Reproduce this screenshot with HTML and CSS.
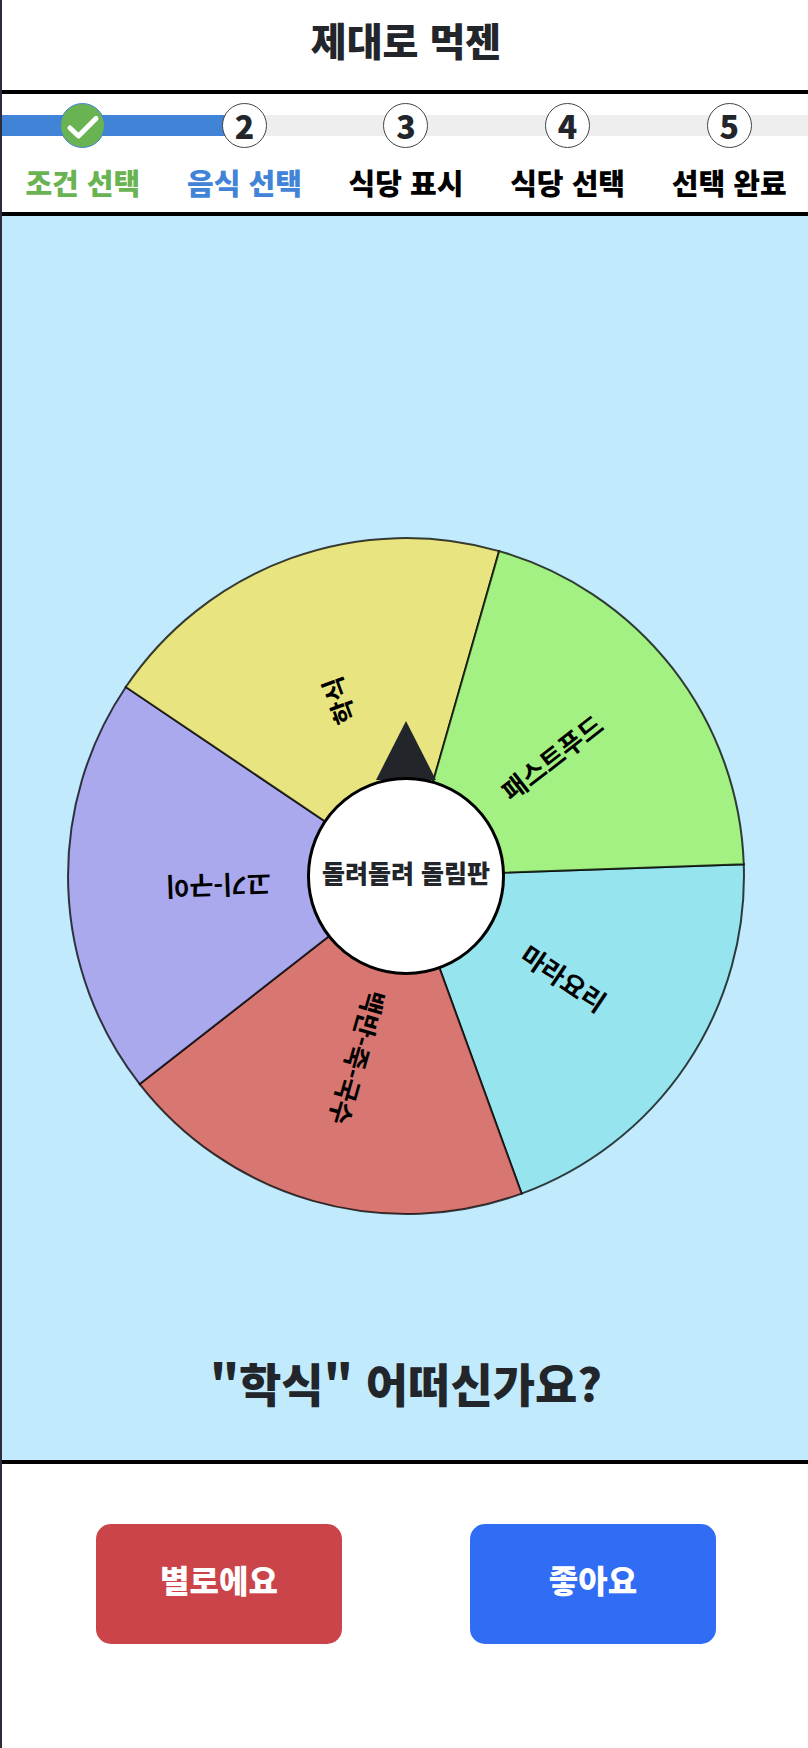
FILE: index.html
```html
<!DOCTYPE html>
<html lang="ko">
<head>
<meta charset="utf-8">
<meta name="viewport" content="width=device-width, initial-scale=1">
<title>제대로 먹젠</title>
<link rel="stylesheet" href="styles.css">
</head>
<body>
<div class="app">
  <header class="header">
    <h1 class="title">제대로 먹젠</h1>
  </header>

  <ol class="steps">
    <li class="step step-done">
      <span class="marker">
        <svg class="check" viewBox="0 0 42 42" aria-hidden="true"><path d="M8 24l8.5 8L34 14.500"/></svg>
      </span>
      <span class="label">조건 선택</span>
    </li>
    <li class="step step-active" aria-current="step">
      <span class="marker">2</span>
      <span class="label">음식 선택</span>
    </li>
    <li class="step">
      <span class="marker">3</span>
      <span class="label">식당 표시</span>
    </li>
    <li class="step">
      <span class="marker">4</span>
      <span class="label">식당 선택</span>
    </li>
    <li class="step">
      <span class="marker">5</span>
      <span class="label">선택 완료</span>
    </li>
  </ol>

  <main class="main">
    <div class="roulette">
      <svg class="wheel" viewBox="-340 -340 680 680">
        <!-- each slice spans 72 degrees, centred on the x axis before it is turned -->
        <g transform="rotate(34)"><path class="slice" fill="#96e4ed" d="M0 0L273.4-198.7A338 338 0 0 1 273.4 198.7Z"/><text class="food" x="188" y="7">마라요리</text></g>
        <g transform="rotate(106)"><path class="slice" fill="#d87671" d="M0 0L273.4-198.7A338 338 0 0 1 273.4 198.7Z"/><text class="food" x="188" y="7">백반-죽-국수</text></g>
        <g transform="rotate(178)"><path class="slice" fill="#aaa9ee" d="M0 0L273.4-198.7A338 338 0 0 1 273.4 198.7Z"/><text class="food" x="188" y="7">고기-구이</text></g>
        <g transform="rotate(250)"><path class="slice" fill="#e8e580" d="M0 0L273.4-198.7A338 338 0 0 1 273.4 198.7Z"/><text class="food" x="188" y="7">학식</text></g>
        <g transform="rotate(322)"><path class="slice" fill="#a3f182" d="M0 0L273.4-198.7A338 338 0 0 1 273.4 198.7Z"/><text class="food" x="188" y="7">패스트푸드</text></g>
        <path class="pointer" d="M0-155L30-96H-30Z"/>
      </svg>
      <button class="hub" type="button">돌려돌려 돌림판</button>
    </div>
    <p class="question">"학식" 어떠신가요?</p>
  </main>

  <footer class="actions">
    <button class="btn btn-no" type="button">별로에요</button>
    <button class="btn btn-yes" type="button">좋아요</button>
  </footer>
</div>
</body>
</html>
```
FILE: styles.css
```css
* {
  box-sizing: border-box;
}

body {
  margin: 0;
  padding-left: 2px;
  background: #2c2d38;
  color: #22252a;
  font-family: "Noto Sans CJK KR", sans-serif;
  overflow: hidden;
}

.app {
  display: flex;
  flex-direction: column;
  width: 100vw;
  min-height: 100vh;
  background: #fff;
}

.header {
  padding: 12px 0 24px;
  border-bottom: 4px solid #000;
  text-align: center;
}

.title {
  margin: 0;
  font-size: 39px;
  line-height: 54px;
  font-weight: 900;
}

.steps {
  display: grid;
  grid-template-columns: repeat(5, 1fr);
  margin: 0;
  padding: 9px 0 9px;
  border-bottom: 4px solid #000;
  list-style: none;
}

.step {
  display: flex;
  flex-direction: column;
  align-items: center;
  gap: 13px;
  background: linear-gradient(#eee, #eee) 0 12px / 100% 21px no-repeat;
  color: #000;
}

.step-done {
  background-image: linear-gradient(#4183d7, #4183d7);
  color: #6ab352;
}

.step-active {
  background-image: linear-gradient(90deg, #4183d7 50%, #eee 50%);
  color: #4183d7;
}

.marker {
  display: flex;
  align-items: center;
  justify-content: center;
  width: 45px;
  height: 45px;
  padding-bottom: 1px;
  border: 1px solid #444;
  border-radius: 50%;
  background: #fff;
  color: #22252a;
  font-size: 32px;
  line-height: 40px;
  font-weight: 900;
}

.step-done .marker {
  border-color: #4183d7;
  background: #6ab352;
}

.check {
  width: 42px;
  fill: none;
  stroke: #fff;
  stroke-width: 5;
  stroke-linecap: round;
  stroke-linejoin: round;
}

.label {
  font-size: 29px;
  line-height: 42px;
  font-weight: 900;
  white-space: nowrap;
}

.main {
  padding: 320px 24px 42px;
  background: #c1eafc;
}

.roulette {
  display: grid;
  place-items: center;
  max-width: 680px;
  margin: 0 auto;
}

.wheel,
.hub {
  grid-area: 1 / 1;
}

.wheel {
  display: block;
  width: 100%;
}

.slice {
  stroke: #000;
  stroke-opacity: 0.75;
  stroke-width: 2;
}

.food {
  font-size: 26px;
  font-weight: 700;
  text-anchor: middle;
}

.pointer {
  fill: #22252a;
}

.hub {
  width: 29%;
  aspect-ratio: 1;
  padding: 0 0 8px;
  border: 3px solid #000;
  border-radius: 50%;
  background: #fff;
  color: inherit;
  font: 900 25px/36px "Noto Sans CJK KR", sans-serif;
  white-space: nowrap;
}

.question {
  margin: 130px 0 0;
  font-size: 46px;
  line-height: 72px;
  font-weight: 900;
  text-align: center;
}

.actions {
  flex: 1;
  display: flex;
  align-items: flex-start;
  justify-content: center;
  gap: 128px;
  padding: 60px 24px 104px;
  border-top: 4px solid #000;
}

.btn {
  width: 246px;
  height: 120px;
  padding: 0 0 10px;
  border: 0;
  border-radius: 15px;
  color: #fff;
  font: 900 32px/48px "Noto Sans CJK KR", sans-serif;
}

.btn-no {
  background: #cb444a;
}

.btn-yes {
  background: #316cf4;
}
```
